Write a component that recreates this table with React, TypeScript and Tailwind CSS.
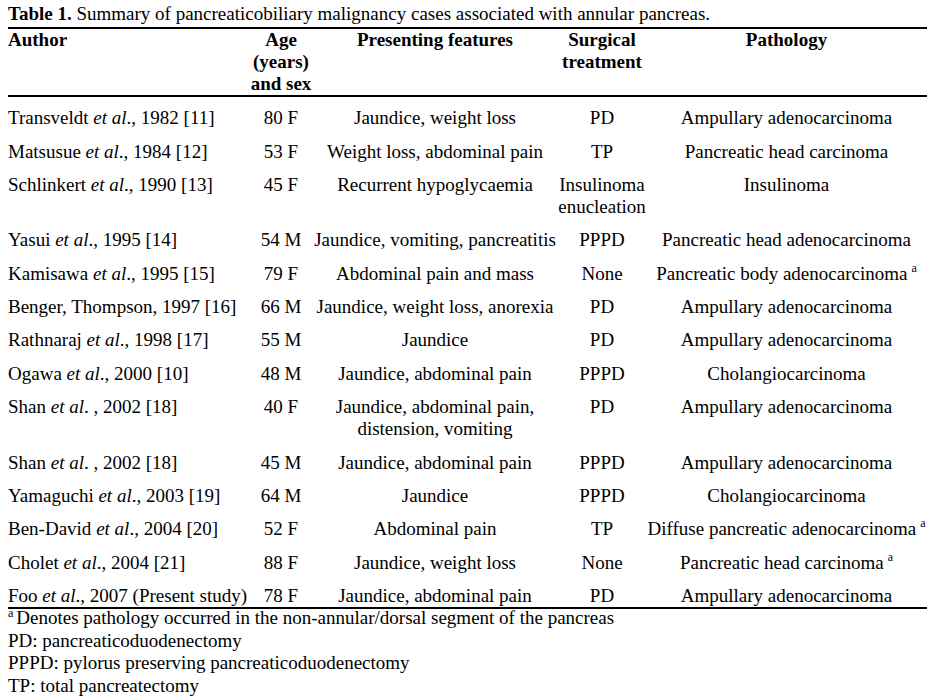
import React from 'react';

type Row = {
  author: string;
  etal?: boolean;
  rest: string;
  age: string;
  features: React.ReactNode;
  surgery: React.ReactNode;
  pathology: string;
  note?: boolean;
};

const rows: Row[] = [
  { author: 'Transveldt', etal: true, rest: ', 1982 [11]', age: '80 F', features: 'Jaundice, weight loss', surgery: 'PD', pathology: 'Ampullary adenocarcinoma' },
  { author: 'Matsusue', etal: true, rest: ', 1984 [12]', age: '53 F', features: 'Weight loss, abdominal pain', surgery: 'TP', pathology: 'Pancreatic head carcinoma' },
  { author: 'Schlinkert', etal: true, rest: ', 1990 [13]', age: '45 F', features: 'Recurrent hypoglycaemia', surgery: <>Insulinoma<br />enucleation</>, pathology: 'Insulinoma' },
  { author: 'Yasui', etal: true, rest: ', 1995 [14]', age: '54 M', features: 'Jaundice, vomiting, pancreatitis', surgery: 'PPPD', pathology: 'Pancreatic head adenocarcinoma' },
  { author: 'Kamisawa', etal: true, rest: ', 1995 [15]', age: '79 F', features: 'Abdominal pain and mass', surgery: 'None', pathology: 'Pancreatic body adenocarcinoma', note: true },
  { author: 'Benger, Thompson', rest: ', 1997 [16]', age: '66 M', features: 'Jaundice, weight loss, anorexia', surgery: 'PD', pathology: 'Ampullary adenocarcinoma' },
  { author: 'Rathnaraj', etal: true, rest: ', 1998 [17]', age: '55 M', features: 'Jaundice', surgery: 'PD', pathology: 'Ampullary adenocarcinoma' },
  { author: 'Ogawa', etal: true, rest: ', 2000 [10]', age: '48 M', features: 'Jaundice, abdominal pain', surgery: 'PPPD', pathology: 'Cholangiocarcinoma' },
  { author: 'Shan', etal: true, rest: ' , 2002 [18]', age: '40 F', features: <>Jaundice, abdominal pain,<br />distension, vomiting</>, surgery: 'PD', pathology: 'Ampullary adenocarcinoma' },
  { author: 'Shan', etal: true, rest: ' , 2002 [18]', age: '45 M', features: 'Jaundice, abdominal pain', surgery: 'PPPD', pathology: 'Ampullary adenocarcinoma' },
  { author: 'Yamaguchi', etal: true, rest: ', 2003 [19]', age: '64 M', features: 'Jaundice', surgery: 'PPPD', pathology: 'Cholangiocarcinoma' },
  { author: 'Ben-David', etal: true, rest: ', 2004 [20]', age: '52 F', features: 'Abdominal pain', surgery: 'TP', pathology: 'Diffuse pancreatic adenocarcinoma', note: true },
  { author: 'Cholet', etal: true, rest: ', 2004 [21]', age: '88 F', features: 'Jaundice, weight loss', surgery: 'None', pathology: 'Pancreatic head carcinoma', note: true },
  { author: 'Foo', etal: true, rest: ', 2007 (Present study)', age: '78 F', features: 'Jaundice, abdominal pain', surgery: 'PD', pathology: 'Ampullary adenocarcinoma' },
];

const cols = 'grid grid-cols-[242px_62px_246px_88px_281px]';

const Sup = () => <sup className="text-[12px] ml-[4px] relative -top-[8px]">a</sup>;

export default function App() {
  return (
    <div className="min-h-screen bg-white text-black font-[family-name:'Liberation_Serif',serif] text-[19px] px-[8px] pt-[3px]">
      <div className="w-[919px]">
        <div className="leading-[22.5px]">
          <b>Table 1.</b> Summary of pancreaticobiliary malignancy cases associated with annular pancreas.
        </div>

        {/* header */}
        <div className={`${cols} border-t-2 border-b-2 border-black font-bold leading-[22px] mt-[1px]`}>
          <div>Author</div>
          <div className="text-center">Age<br />(years)<br />and sex</div>
          <div className="text-center">Presenting features</div>
          <div className="text-center">Surgical<br />treatment</div>
          <div className="text-center">Pathology</div>
        </div>

        {/* body */}
        <div className="border-b-2 border-black pt-[5px] leading-[22px]">
          {rows.map((r, i) => (
            <div key={i} className={`${cols} whitespace-nowrap ${i === rows.length - 1 ? 'pt-[5.7px] pb-0' : 'py-[5.7px]'}`}>
              <div>
                {r.author}
                {r.etal && <> <i>et al</i>.</>}
                {r.rest}
              </div>
              <div className="text-center">{r.age}</div>
              <div className="text-center">{r.features}</div>
              <div className="text-center">{r.surgery}</div>
              <div className="text-center">
                {r.pathology}
                {r.note && <Sup />}
              </div>
            </div>
          ))}
        </div>

        {/* footnotes */}
        <div className="leading-[22.7px] -mt-[2px]">
          <div>
            <sup className="text-[12px] relative -top-[7px] mr-[3px]">a</sup>Denotes pathology occurred in the non-annular/dorsal segment of the pancreas
          </div>
          <div>PD: pancreaticoduodenectomy</div>
          <div>PPPD: pylorus preserving pancreaticoduodenectomy</div>
          <div>TP: total pancreatectomy</div>
        </div>
      </div>
    </div>
  );
}
